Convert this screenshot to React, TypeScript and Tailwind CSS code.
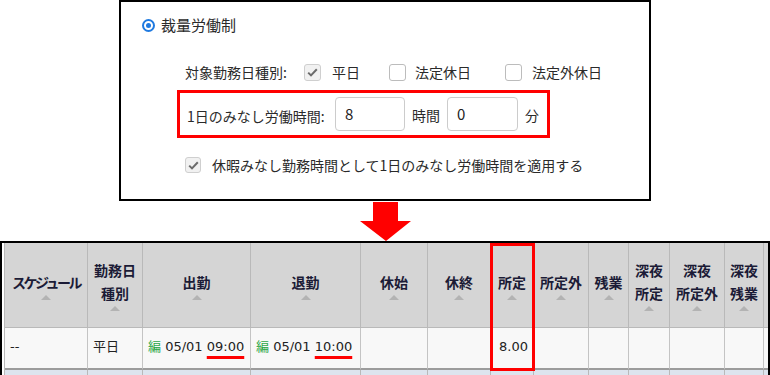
import React from "react";

const jp = "font-['Noto_Sans_CJK_JP',sans-serif]";
const data = "font-['DejaVu_Sans','Noto_Sans_CJK_JP',sans-serif]";

function Check({ checked, size = 17 }: { checked?: boolean; size?: number }) {
  return (
    <span
      style={{ width: size, height: size }}
      className={`flex shrink-0 items-center justify-center rounded-[3px] border ${
        checked ? "border-[#cfcfcf] bg-[#f1f1f1]" : "border-[#bcbcbc] bg-white"
      }`}
    >
      {checked && (
        <svg width="11" height="9" viewBox="0 0 11 9">
          <path d="M1.2 4.6 L4 7.4 L9.8 1.2" stroke="#6b6b6b" strokeWidth="2" fill="none" />
        </svg>
      )}
    </span>
  );
}

function Tri() {
  return <span className="mt-[1px] block h-0 w-0 border-x-[5px] border-b-[5px] border-x-transparent border-b-[#b3b3b3]" />;
}

const cols: { lines: string[]; cls?: string }[] = [
  { lines: ["スケジュール"], cls: "tracking-[-2.5px]" },
  { lines: ["勤務日", "種別"] },
  { lines: ["出勤"] },
  { lines: ["退勤"] },
  { lines: ["休始"] },
  { lines: ["休終"] },
  { lines: ["所定"] },
  { lines: ["所定外"] },
  { lines: ["残業"] },
  { lines: ["深夜", "所定"] },
  { lines: ["深夜", "所定外"] },
  { lines: ["深夜", "残業"] },
];

function Stamp({ time }: { time: string }) {
  return (
    <span className="whitespace-nowrap">
      <span className="text-[#2ea84a]">編</span> 05/01{" "}
      <span className="underline decoration-[#ff0000] decoration-[3px] underline-offset-[5px]">{time}</span>
    </span>
  );
}

export default function App() {
  const row: React.ReactNode[] = [
    "--",
    "平日",
    <Stamp time="09:00" />,
    <Stamp time="10:00" />,
    "",
    "",
    "8.00",
    "",
    "",
    "",
    "",
    "",
  ];

  return (
    <div className="h-[375px] w-[770px] overflow-hidden bg-white">
      {/* settings panel */}
      <div className={`ml-[119px] h-[201px] w-[532px] border-2 border-black text-[14px] text-[#2a2a2a] ${jp}`}>
        <div className="ml-[21px] mt-[13px] flex h-[20px] items-center">
          <span className="flex h-[13px] w-[13px] items-center justify-center rounded-full border-2 border-[#1f7ae0] bg-white">
            <span className="h-[5px] w-[5px] rounded-full bg-[#1f7ae0]" />
          </span>
          <span className="ml-[6px] text-[15px]">裁量労働制</span>
        </div>

        <div className="ml-[64px] mt-[27px] flex h-[20px] items-center">
          <span className="w-[113px] whitespace-nowrap">対象勤務日種別:</span>
          <span className="ml-[6px]">
            <Check checked />
          </span>
          <span className="ml-[11px]">平日</span>
          <span className="ml-[29px]">
            <Check />
          </span>
          <span className="ml-[9px]">法定休日</span>
          <span className="ml-[34px]">
            <Check />
          </span>
          <span className="ml-[10px]">法定外休日</span>
        </div>

        <div className="ml-[56px] mt-[8px] flex h-[48px] w-[373px] items-center border-[3px] border-[#ff0000] pl-[7px]">
          <span className="w-[148px] whitespace-nowrap pt-[4px]">1日のみなし労働時間:</span>
          <span className="flex h-[34px] w-[70px] items-center rounded-[4px] border border-[#cccccc] pl-[9px] text-[15px] text-[#222]">8</span>
          <span className="ml-[7px] pt-[2px]">時間</span>
          <span className="ml-[7px] flex h-[34px] w-[71px] items-center rounded-[4px] border border-[#cccccc] pl-[9px] text-[15px] text-[#222]">0</span>
          <span className="ml-[7px] pt-[2px]">分</span>
        </div>

        <div className="ml-[64px] mt-[17px] flex h-[20px] items-center">
          <Check checked size={16} />
          <span className="ml-[11px] whitespace-nowrap">休暇みなし勤務時間として1日のみなし労働時間を適用する</span>
        </div>
      </div>

      {/* arrow */}
      <div className="h-[40px] pl-[360px]">
        <svg width="52" height="40" viewBox="0 0 52 40">
          <polygon points="13,1 38,1 38,20 51,20 26,40 0,20 13,20" fill="#ff0000" />
        </svg>
      </div>

      {/* attendance table */}
      <div className="relative w-[770px] border-2 border-b-0 border-black">
        <div
          className={`ml-[2px] grid grid-cols-[83px_55px_108px_110px_67px_63px_43px_55px_40px_41px_55px_39px_1fr] border-l border-[#b9b9b9] ${jp}`}
        >
          {cols.map((c, i) => (
            <div
              key={`h${i}`}
              className="flex h-[85px] flex-col items-center justify-center border-b border-r border-[#b9b9b9] bg-[#d5d5d5] text-[14px] font-bold leading-[23px] text-[#1b1b36]"
            >
              {c.lines.map((l) => (
                <span key={l} className={`whitespace-nowrap ${c.cls ?? ""}`}>
                  {l}
                </span>
              ))}
              <Tri />
            </div>
          ))}
          <div className="h-[85px] border-b border-[#b9b9b9] bg-[#d5d5d5]" />

          {row.map((v, i) => (
            <div
              key={`d${i}`}
              className={`flex h-[42px] items-center border-b-2 border-r border-b-[#9c9c9c] border-r-[#c4c4c4] bg-[#f8f8f8] px-[5px] pb-[2px] text-[13px] text-[#222] ${data} ${
                i === 6 ? "justify-end" : ""
              }`}
            >
              {v}
            </div>
          ))}
          <div className="h-[42px] border-b-2 border-b-[#9c9c9c] bg-[#f8f8f8]" />

          {cols.map((_, i) => (
            <div key={`e${i}`} className="h-[10px] border-r border-[#b9b9b9] bg-[#dde4ee]" />
          ))}
          <div className="h-[10px] bg-[#dde4ee]" />
        </div>

        {/* highlight on 所定 column */}
        <div className="absolute left-[488px] top-0 h-[128px] w-[45px] border-[3px] border-[#ff0000]" />
      </div>
    </div>
  );
}
